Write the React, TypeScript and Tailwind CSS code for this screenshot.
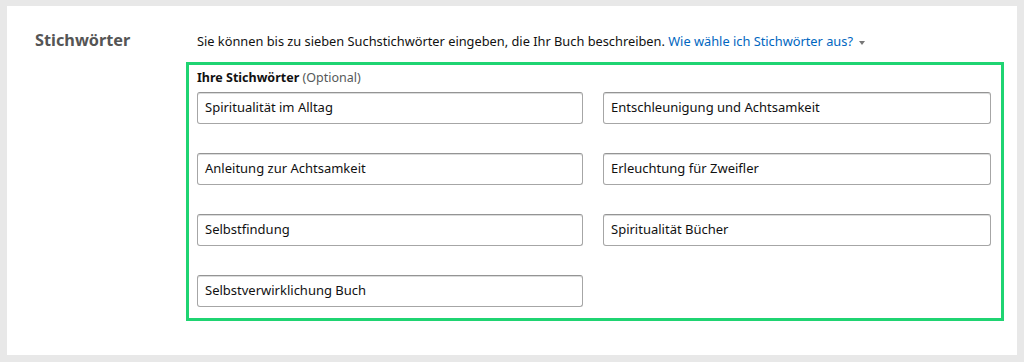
const keywords = [
  "Spiritualität im Alltag",
  "Entschleunigung und Achtsamkeit",
  "Anleitung zur Achtsamkeit",
  "Erleuchtung für Zweifler",
  "Selbstfindung",
  "Spiritualität Bücher",
  "Selbstverwirklichung Buch",
];

export default function App() {
  return (
    <div
      className="h-[362px] w-[1024px] bg-[#e8e8e8] pl-[7px] pr-[7px] pt-[6px] pb-[7px]"
      style={{ fontFamily: '"Noto Sans", Arial, sans-serif' }}
    >
      <div className="flex h-full bg-white text-[#111]">
        <div className="w-[179px] shrink-0 pl-[28px] pt-[21px]">
          <h2 className="text-[16.3px] font-bold leading-[26px] text-[#555]">Stichwörter</h2>
        </div>
        <div className="flex flex-col pt-[25px]">
          <p className="ml-[11px] text-[12.8px] leading-[20px]">
            Sie können bis zu sieben Suchstichwörter eingeben, die Ihr Buch beschreiben.{" "}
            <span className="text-[#0066c0]">Wie wähle ich Stichwörter aus?</span>
            <span className="ml-[6px] inline-block align-middle border-x-[3.5px] border-t-[4px] border-x-transparent border-t-[#777]" />
          </p>
          <div className="mt-[11px] h-[259px] w-[818px] border-[3px] border-[#1fd472] px-[8px] pt-[4px]">
            <div className="text-[12.5px] leading-[18px]">
              <span className="font-bold">Ihre Stichwörter</span>{" "}
              <span className="text-[#565959]">(Optional)</span>
            </div>
            <div className="mt-[5px] grid grid-cols-[386px_388px] gap-x-[20px] gap-y-[29px]">
              {keywords.map((k) => (
                <div
                  key={k}
                  className="flex h-[32px] items-center rounded-[3px] border border-[#a6a6a6] border-t-[#949494] px-[7px] text-[13px] shadow-[0_1px_0_rgba(255,255,255,0.5),inset_0_1px_0_rgba(15,17,17,0.15)]"
                >
                  {k}
                </div>
              ))}
            </div>
          </div>
        </div>
      </div>
    </div>
  );
}
